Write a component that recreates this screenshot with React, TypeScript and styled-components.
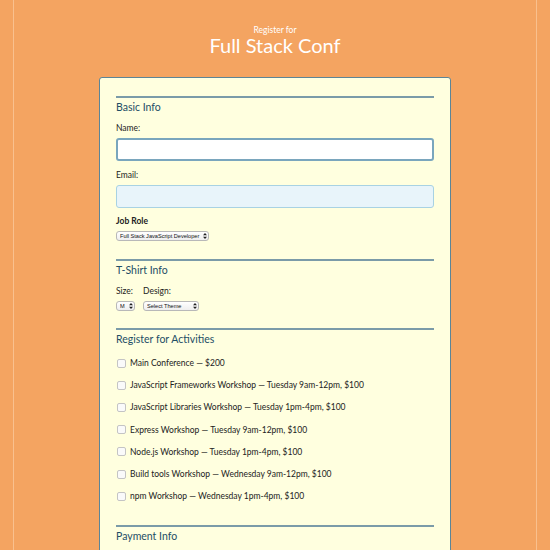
import React from "react";
import styled, { createGlobalStyle } from "styled-components";

const Global = createGlobalStyle`
    html, body {
        margin:0;
        padding:0;
        background:#f4a461;
        font-family:Lato, "Noto Sans", sans-serif;
    }
`
const Page = styled.div`
    margin:0 13px;
    height:550px;
    overflow:hidden;
    border-left:1px solid #f9c08e;
    border-right:1px solid #f9c08e;
    display:flex;
    flex-direction:column;
    align-items:center;
    padding-top:26px;
    box-sizing:border-box;
`
const Header = styled.header`
    display:flex;
    flex-direction:column;
    align-items:center;
    color:#fff;
    margin-bottom:22px;
`
const Kicker = styled.span`
    font-size:8.5px;
    line-height:9px;
`
const Title = styled.h1`
    margin:0;
    font-weight:400;
    font-size:20px;
    line-height:20px;
`
const Card = styled.form`
    width:352px;
    flex-shrink:0;
    box-sizing:border-box;
    background:#ffffdf;
    border:1px solid #5b8597;
    border-radius:3px;
    padding:18px 16px 0;
`
const Section = styled.fieldset<{gap?:number}>`
    border:none;
    margin:0;
    padding:0 0 ${p=>p.gap ?? 18}px;
    border-top:2px solid #7b9ba8;
    min-inline-size:0;
`
const Legend = styled.h2<{tight?:boolean}>`
    margin:0;
    padding:2px 0 ${p=>p.tight ? 6 : 9}px;
    font-weight:400;
    font-size:10.5px;
    line-height:14px;
    color:#1e4e66;
`
const Label = styled.label<{bold?:boolean}>`
    display:block;
    font-size:8.5px;
    line-height:11px;
    color:#222;
    font-weight:${p=>p.bold ? 700 : 400};
    margin-bottom:4px;
`
const TextInput = styled.input<{tint?:boolean}>`
    display:block;
    width:100%;
    box-sizing:border-box;
    height:23px;
    margin:0 0 8.5px;
    border-radius:3px;
    border:${p=>p.tint ? '1px solid #a8d2e3' : '2px solid #7aa6bd'};
    background:${p=>p.tint ? '#e8f4fa' : '#fff'};
    outline:none;
`
const Row = styled.div`
    display:flex;
    gap:8px;
    align-items:flex-end;
`
const Col = styled.div`
    display:flex;
    flex-direction:column;
`
const SelectWrap = styled.div<{w:number}>`
    position:relative;
    width:${p=>p.w}px;
    height:10px;
`
const Select = styled.select`
    display:block;
    appearance:none;
    width:100%;
    height:10px;
    box-sizing:border-box;
    margin:0;
    border:1px solid #b8b8b8;
    border-radius:3px;
    background:linear-gradient(#fff,#eee);
    font-family:"Liberation Sans", Arial, sans-serif;
    font-size:5.6px;
    line-height:8px;
    padding:0 6px 0 3px;
    color:#111;
`
const Arrows = styled.svg`
    position:absolute;
    right:2px;
    top:2px;
    pointer-events:none;
`
const Activity = styled.label`
    display:flex;
    align-items:center;
    height:22.2px;
    font-size:8.5px;
    color:#222;
`
const Check = styled.span`
    width:7px;
    height:7px;
    border:1px solid #c4c4c4;
    border-radius:2px;
    background:#fafafa;
    margin:0 4px 0 1px;
    flex-shrink:0;
`

const Dropdown: React.FC<{w:number; value:string}> = ({w, value}) => (
    <SelectWrap w={w}>
        <Select defaultValue={value}><option>{value}</option></Select>
        <Arrows width="4" height="6" viewBox="0 0 4 6">
            <path d="M2 0 L4 2.3 H0 Z M2 6 L4 3.7 H0 Z" fill="#222"/>
        </Arrows>
    </SelectWrap>
)

const activities = [
    "Main Conference — $200",
    "JavaScript Frameworks Workshop — Tuesday 9am-12pm, $100",
    "JavaScript Libraries Workshop — Tuesday 1pm-4pm, $100",
    "Express Workshop — Tuesday 9am-12pm, $100",
    "Node.js Workshop — Tuesday 1pm-4pm, $100",
    "Build tools Workshop — Wednesday 9am-12pm, $100",
    "npm Workshop — Wednesday 1pm-4pm, $100",
]

export default function App() {
    return (
        <>
            <Global/>
            <Page>
                <Header>
                    <Kicker>Register for</Kicker>
                    <Title>Full Stack Conf</Title>
                </Header>
                <Card>
                    <Section>
                        <Legend>Basic Info</Legend>
                        <Label>Name:</Label>
                        <TextInput/>
                        <Label>Email:</Label>
                        <TextInput tint/>
                        <Label bold>Job Role</Label>
                        <Dropdown w={93} value="Full Stack JavaScript Developer"/>
                    </Section>
                    <Section gap={17}>
                        <Legend>T-Shirt Info</Legend>
                        <Row>
                            <Col><Label>Size:</Label><Dropdown w={19} value="M"/></Col>
                            <Col><Label>Design:</Label><Dropdown w={56} value="Select Theme"/></Col>
                        </Row>
                    </Section>
                    <Section>
                        <Legend tight>Register for Activities</Legend>
                        {activities.map(a => (
                            <Activity key={a}><Check/>{a}</Activity>
                        ))}
                    </Section>
                    <Section>
                        <Legend>Payment Info</Legend>
                    </Section>
                </Card>
            </Page>
        </>
    )
}
